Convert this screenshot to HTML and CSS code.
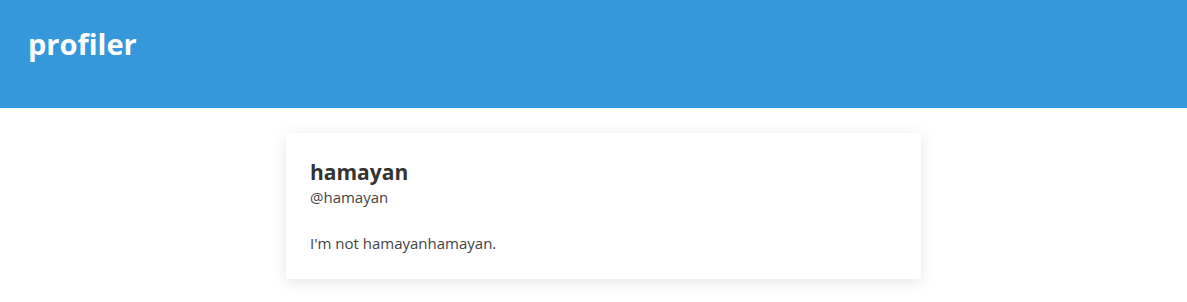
FILE: index.html
```html
<!DOCTYPE html>
<html lang="ja">
<head>
  <meta charset="UTF-8">
  <title>profiler</title>
  <link rel="stylesheet" href="styles.css">
</head>
<body>
  <header class="header">
    <h1 class="logo">profiler</h1>
  </header>
  <main class="main">
    <div class="card">
      <h2 class="name">hamayan</h2>
      <div class="user-id">@hamayan</div>
      <p class="bio">I'm not hamayanhamayan.</p>
    </div>
  </main>
</body>
</html>
```

FILE: styles.css
```css
body, html {
  margin: 0;
  padding: 0;
  font-family: "Open Sans", "Noto Sans", sans-serif;
  background-color: #fff;
  color: #333;
}
.header {
  background-color: #3498db;
  height: 108px;
  padding: 0 28px;
  box-sizing: border-box;
}
.logo {
  margin: 0;
  padding-top: 24px;
  font-size: 29px;
  font-weight: 700;
  color: #fff;
  line-height: 40px;
}
.main {
  padding: 25px 0 24px 286px;
}
.card {
  width: 635px;
  box-sizing: border-box;
  background: #fff;
  padding: 24px 24px 24px;
  box-shadow: 0 3px 14px rgba(0,0,0,0.1);
}
.name {
  margin: 0;
  font-size: 21px;
  font-weight: 700;
  line-height: 30px;
  color: #333;
}
.user-id {
  font-size: 15px;
  line-height: 20px;
  color: #444;
}
.bio {
  margin: 24px 0 0;
  font-size: 15px;
  line-height: 24px;
  color: #444;
}
```
